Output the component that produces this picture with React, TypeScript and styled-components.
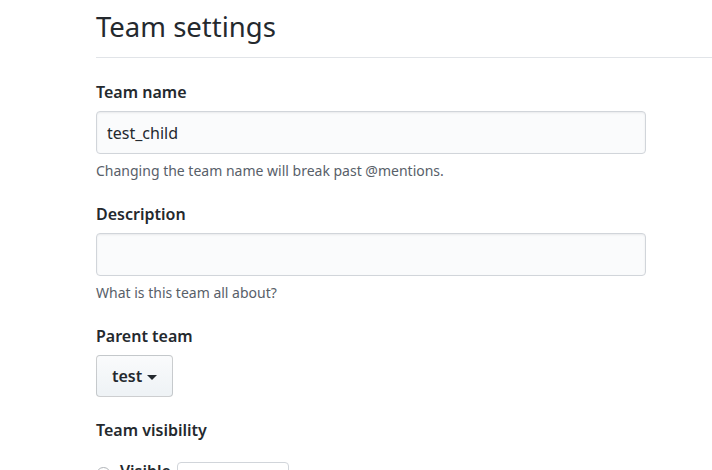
import React from 'react';
import styled, { createGlobalStyle } from 'styled-components';

const GlobalStyle = createGlobalStyle`
    html, body {
        margin: 0;
        padding: 0;
        background: #fff;
        overflow: hidden;
    }

    body {
        font-family: 'Noto Sans', 'Liberation Sans', sans-serif;
        color: #24292e;
    }
`;

const Page = styled.div`
    padding-left: 96px;
    width: 616px;
`;

const Subhead = styled.div`
    border-bottom: 1px solid #e1e4e8;
    padding-top: 6px;
    height: 58px;
    box-sizing: border-box;
    margin-bottom: 22px;
`;

const Heading = styled.h1`
    margin: 0;
    font-size: 27.5px;
    font-weight: 400;
    line-height: 42px;
`;

const FormGroup = styled.div`
    margin-bottom: 21px;
`;

const Label = styled.label`
    display: block;
    font-size: 16px;
    font-weight: 600;
    line-height: 24px;
    margin-bottom: 7px;
`;

const Input = styled.input`
    display: block;
    box-sizing: border-box;
    width: 550px;
    height: 43px;
    padding: 0 10px;
    font-family: inherit;
    font-size: 16px;
    color: #24292e;
    background: #fafbfc;
    border: 1px solid #d1d5da;
    border-radius: 4px;
    box-shadow: inset 0 1px 2px rgba(27, 31, 35, 0.075);
    outline: none;
`;

const Note = styled.p`
    margin: 7px 0 0;
    font-size: 14px;
    line-height: 20px;
    color: #586069;
`;

const SelectButton = styled.button`
    display: inline-flex;
    align-items: center;
    gap: 5px;
    box-sizing: border-box;
    height: 42px;
    padding: 0 15px;
    font-family: inherit;
    font-size: 16px;
    font-weight: 600;
    color: #24292e;
    background-image: linear-gradient(-180deg, #fafbfc 0%, #eff3f6 90%);
    border: 1px solid rgba(27, 31, 35, 0.2);
    border-radius: 4px;
    cursor: pointer;
`;

const Caret = styled.span`
    display: inline-block;
    width: 0;
    height: 0;
    border-top: 5px solid #24292e;
    border-left: 5px solid transparent;
    border-right: 5px solid transparent;
    margin-top: 2px;
`;

const RadioRow = styled.div`
    display: flex;
    align-items: flex-start;
    margin-top: 20px;
`;

const Radio = styled.span`
    box-sizing: border-box;
    width: 15px;
    height: 15px;
    margin: 5px 9px 0 0;
    border: 1px solid #b0b4b8;
    border-radius: 50%;
    background: #fff;
`;

const RadioLabel = styled.span`
    font-size: 16px;
    font-weight: 600;
    line-height: 18px;
    margin-right: 6px;
`;

const Badge = styled.span`
    box-sizing: border-box;
    width: 112px;
    height: 30px;
    border: 1px solid #d1d5da;
    border-radius: 4px;
`;

export default function App() {
    return (
        <Page>
            <GlobalStyle />
            <Subhead>
                <Heading>Team settings</Heading>
            </Subhead>

            <FormGroup>
                <Label>Team name</Label>
                <Input defaultValue="test_child" />
                <Note>Changing the team name will break past @mentions.</Note>
            </FormGroup>

            <FormGroup>
                <Label>Description</Label>
                <Input defaultValue="" />
                <Note>What is this team all about?</Note>
            </FormGroup>

            <FormGroup>
                <Label>Parent team</Label>
                <SelectButton>
                    test
                    <Caret />
                </SelectButton>
            </FormGroup>

            <FormGroup>
                <Label>Team visibility</Label>
                <RadioRow>
                    <Radio />
                    <RadioLabel>Visible</RadioLabel>
                    <Badge />
                </RadioRow>
            </FormGroup>
        </Page>
    );
}
